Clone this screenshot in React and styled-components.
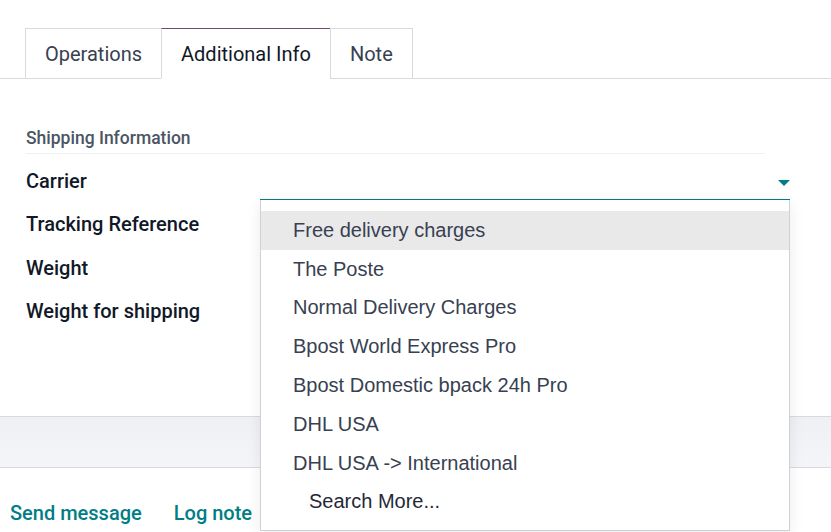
import React from 'react'
import styled, { createGlobalStyle } from 'styled-components'

const GlobalStyle = createGlobalStyle`
  html, body {
    margin: 0;
    padding: 0;
    background: #ffffff;
    font-family: Roboto, "Liberation Sans", sans-serif;
    overflow: hidden;
  }
`

const Page = styled.div`
  width: 831px;
  height: 532px;
  overflow: hidden;
  display: flex;
  flex-direction: column;
`

const Sheet = styled.div`
  height: 417px;
  flex-shrink: 0;
  padding-top: 28px;
  box-sizing: border-box;
  border-bottom: 1px solid #d8dadd;
  display: flex;
  flex-direction: column;
`

const TabNav = styled.div`
  display: flex;
  padding-left: 25px;
  border-bottom: 1px solid #d8dadd;
`

const Tab = styled.div`
  height: 49px;
  padding: 0 19px;
  display: flex;
  align-items: center;
  margin-bottom: -1px;
  margin-left: -1px;
  border: 1px solid #d8dadd;
  border-top-color: ${p => (p.$active ? '#714b67' : '#d8dadd')};
  border-bottom-color: ${p => (p.$active ? '#ffffff' : '#d8dadd')};
  background: #ffffff;
  font-size: 20px;
  color: ${p => (p.$active ? '#111827' : '#374151')};
  &:first-child {
    margin-left: 0;
  }
`

const Content = styled.div`
  padding: 49px 0 0 26px;
`

const SectionTitle = styled.div`
  width: 739px;
  font-size: 17.5px;
  font-weight: 500;
  color: #4b5563;
  padding-bottom: 5px;
  border-bottom: 1px solid #eef0f2;
  margin-bottom: 5px;
`

const Row = styled.div`
  display: grid;
  grid-template-columns: 234px 530px;
  align-items: center;
  height: 43.5px;
`

const Label = styled.div`
  font-size: 20px;
  font-weight: 500;
  color: #111827;
`

const FieldWrap = styled.div`
  position: relative;
  align-self: stretch;
`

const Input = styled.div`
  height: 41px;
  box-sizing: border-box;
  border-bottom: 1px solid #017e84;
  display: flex;
  align-items: flex-end;
  justify-content: flex-end;
  padding-bottom: 13px;
`

const Caret = styled.span`
  width: 0;
  height: 0;
  border-left: 6px solid transparent;
  border-right: 6px solid transparent;
  border-top: 6px solid #017e84;
`

const Dropdown = styled.ul`
  position: absolute;
  z-index: 5;
  left: 0;
  top: 41px;
  width: 530px;
  box-sizing: border-box;
  margin: 0;
  padding: 11px 0 9px;
  list-style: none;
  background: #ffffff;
  border: 1px solid #cfd1d4;
  border-top: none;
  box-shadow: 0 4px 14px rgba(0, 0, 0, 0.08);
`

const Option = styled.li`
  height: 38.8px;
  display: flex;
  align-items: center;
  padding-left: ${p => (p.$more ? '48px' : '32px')};
  font-family: "Liberation Sans", Arial, sans-serif;
  font-size: 20px;
  color: ${p => (p.$more ? '#1f2937' : '#374151')};
  background: ${p => (p.$active ? '#e9e9e9' : 'transparent')};
`

const ChatterBand = styled.div`
  height: 50px;
  flex-shrink: 0;
  background: linear-gradient(180deg, #eef0f4, #f4f5f8);
  border-bottom: 1px solid #d8dadd;
`

const Chatter = styled.div`
  display: flex;
  gap: 32px;
  padding: 33px 0 0 10px;
`

const ChatterButton = styled.span`
  font-size: 20px;
  font-weight: 500;
  color: #017e84;
`

const carriers = [
  'Free delivery charges',
  'The Poste',
  'Normal Delivery Charges',
  'Bpost World Express Pro',
  'Bpost Domestic bpack 24h Pro',
  'DHL USA',
  'DHL USA -> International',
]

export default function App() {
  return (
    <Page>
      <GlobalStyle />
      <Sheet>
        <TabNav>
          <Tab>Operations</Tab>
          <Tab $active>Additional Info</Tab>
          <Tab>Note</Tab>
        </TabNav>
        <Content>
          <SectionTitle>Shipping Information</SectionTitle>
          <Row>
            <Label>Carrier</Label>
            <FieldWrap>
              <Input>
                <Caret />
              </Input>
              <Dropdown>
                {carriers.map((c, i) => (
                  <Option key={c} $active={i === 0}>{c}</Option>
                ))}
                <Option $more>Search More...</Option>
              </Dropdown>
            </FieldWrap>
          </Row>
          <Row>
            <Label>Tracking Reference</Label>
          </Row>
          <Row>
            <Label>Weight</Label>
          </Row>
          <Row>
            <Label>Weight for shipping</Label>
          </Row>
        </Content>
      </Sheet>
      <ChatterBand />
      <Chatter>
        <ChatterButton>Send message</ChatterButton>
        <ChatterButton>Log note</ChatterButton>
      </Chatter>
    </Page>
  )
}
